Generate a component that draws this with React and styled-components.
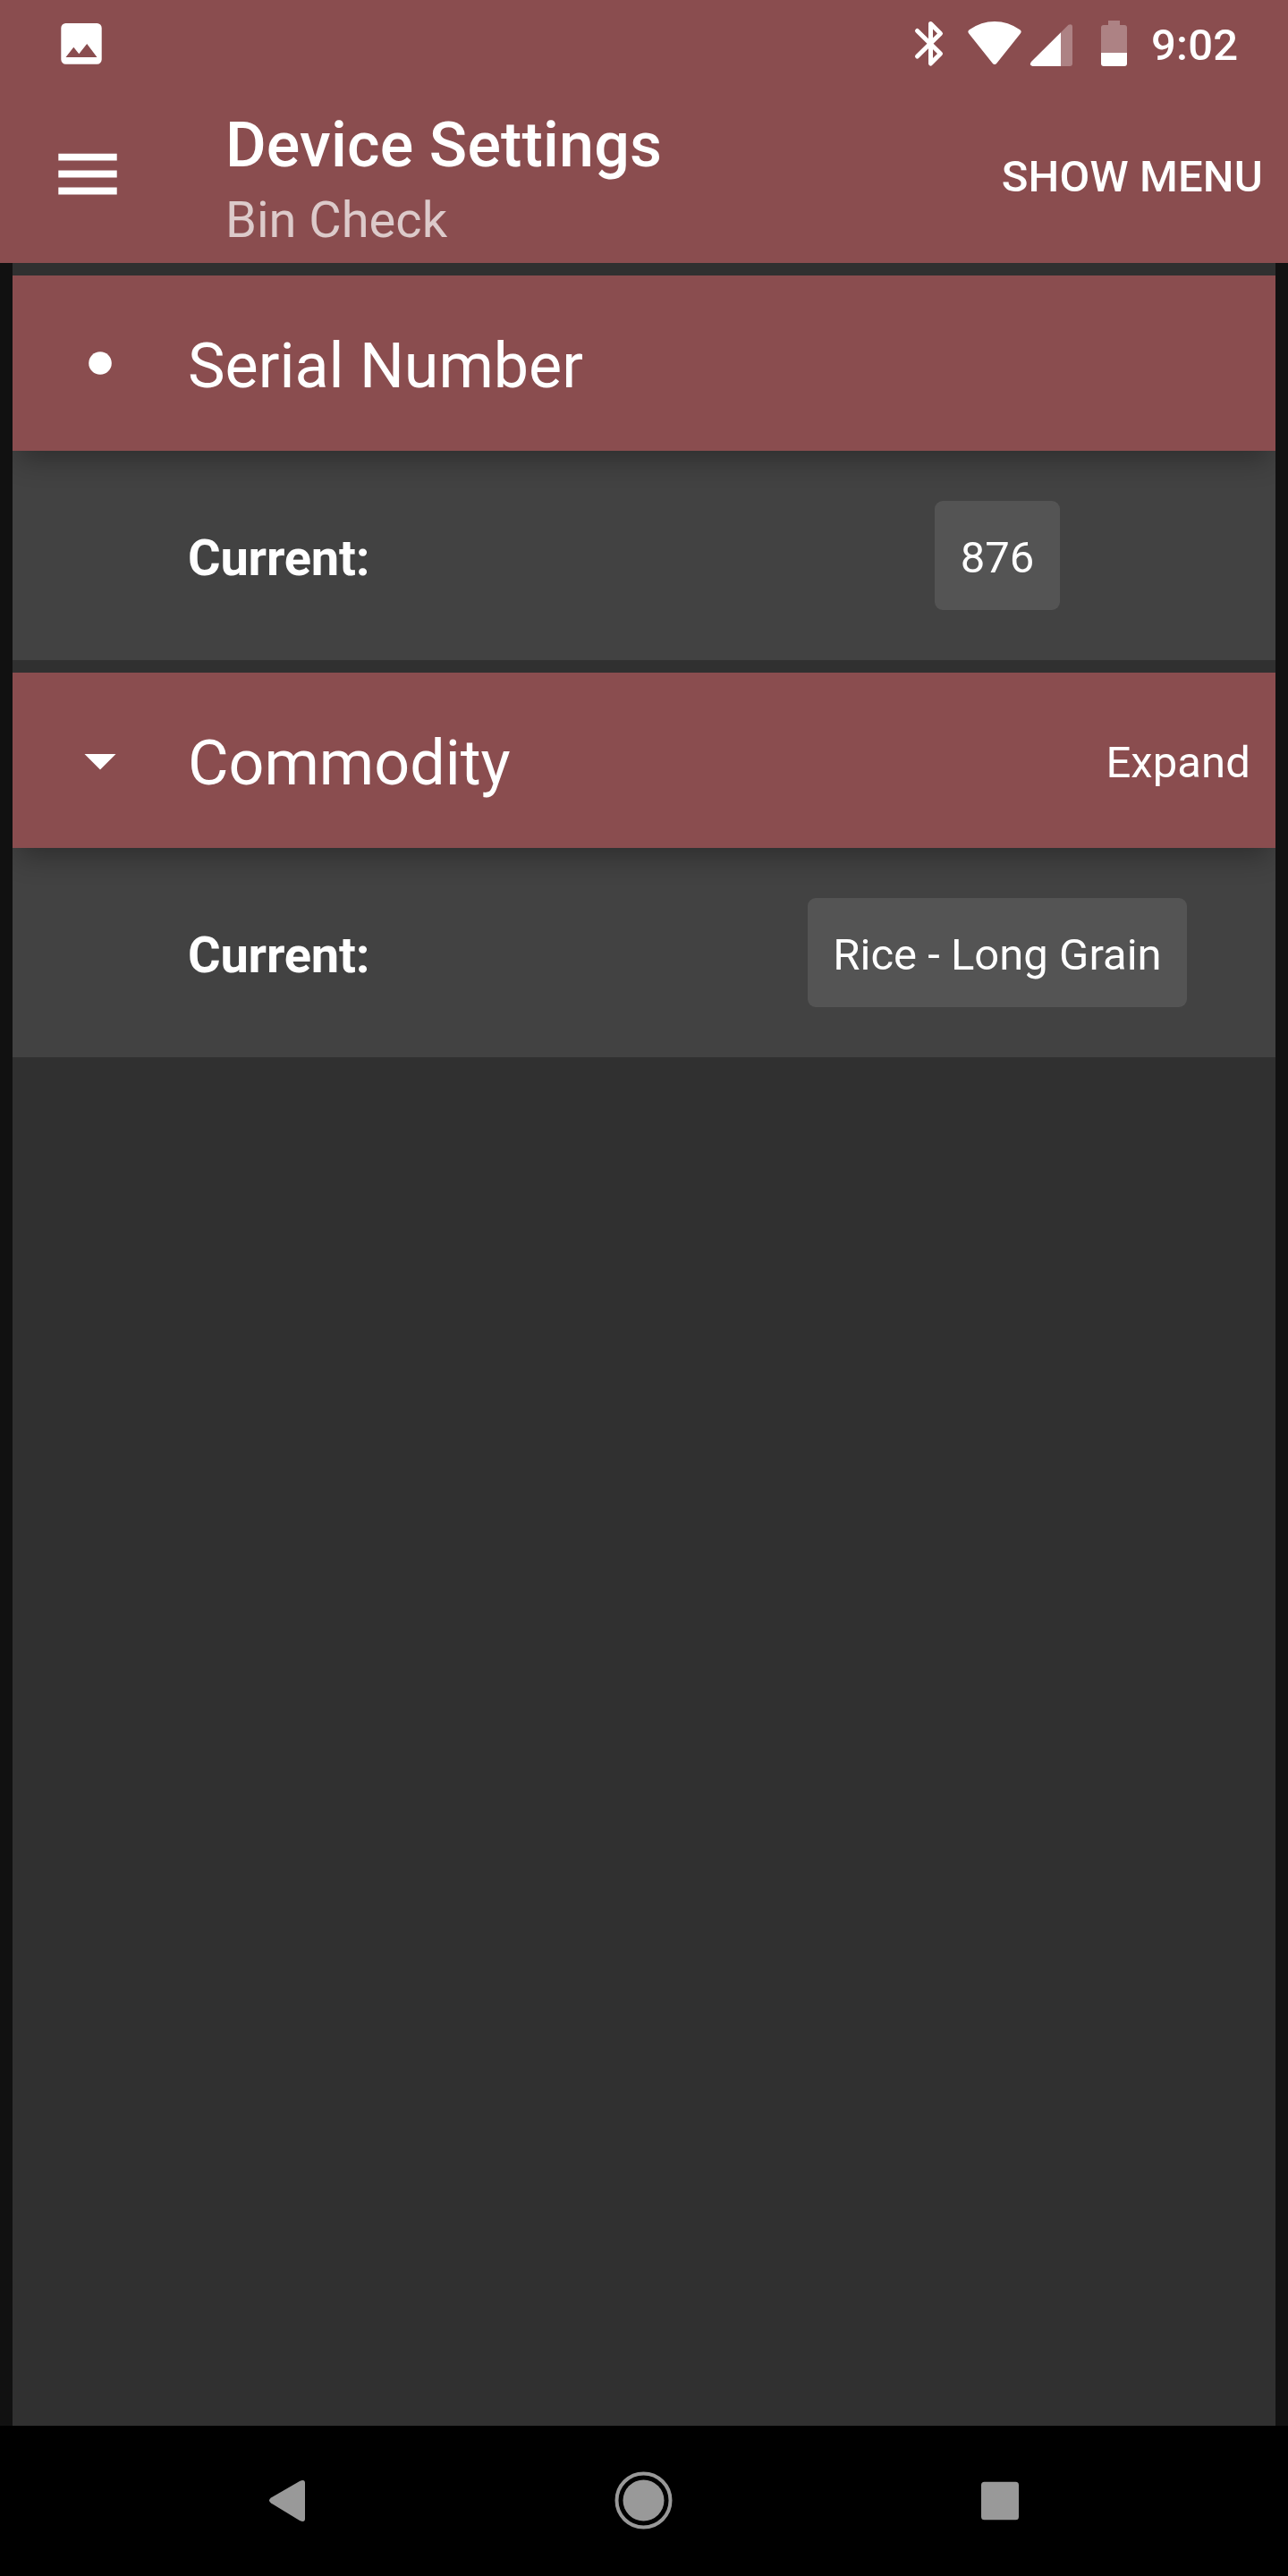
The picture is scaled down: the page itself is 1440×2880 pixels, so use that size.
import React from "react";
import styled, { createGlobalStyle } from "styled-components";

const GlobalStyle = createGlobalStyle`
  * { box-sizing: border-box; }
  body { margin: 0; background: #000; }
`;

const Screen = styled.div`
  width: 1440px;
  height: 2880px;
  display: flex;
  flex-direction: column;
  background: #111;
  color: #fff;
  font-family: Roboto, "Liberation Sans", sans-serif;
  overflow: hidden;
`;

const StatusBar = styled.div`
  height: 98px;
  flex: none;
  display: flex;
  align-items: flex-start;
  justify-content: space-between;
  background: #8a4d4f;
`;

const Glyph = styled.svg`
  display: block;
  flex: none;
`;

const StatusIcons = styled.div`
  display: flex;
  align-items: flex-start;
  padding-right: 56px;
`;

const Clock = styled.span`
  width: 97px;
  white-space: nowrap;
  font-size: 49px;
  font-weight: 500;
  line-height: 58px;
  letter-spacing: 0.2px;
  padding-top: 22px;
`;

const AppBar = styled.header`
  height: 196px;
  flex: none;
  display: flex;
  align-items: flex-start;
  background: #8a4d4f;
`;

const MenuButton = styled.button`
  width: 252px;
  height: 196px;
  padding: 0;
  border: 0;
  background: none;
`;

const Titles = styled.div`
  flex: 1;
  padding-top: 23px;
`;

const Title = styled.h1`
  margin: 0;
  font-size: 70px;
  font-weight: 500;
  line-height: 82px;
  letter-spacing: 0.16px;
`;

const Subtitle = styled.p`
  margin: 10px 0 0;
  font-size: 56px;
  line-height: 66px;
  color: rgba(255, 255, 255, 0.7);
`;

const TextAction = styled.button`
  padding: 71px 28px 0 0;
  border: 0;
  background: none;
  color: #fff;
  font: 500 49px/58px Roboto, "Liberation Sans", sans-serif;
  letter-spacing: 0.15px;
`;

const Content = styled.main`
  flex: 1;
  margin: 0 14px;
  padding-top: 14px;
  display: flex;
  flex-direction: column;
  gap: 14px;
  background: #303030;
`;

const Section = styled.section`
  overflow: hidden;
  background: #424242;
`;

const SectionHeader = styled.div`
  height: 196px;
  display: flex;
  align-items: center;
  padding-right: 28px;
  background: #8a4d4f;
  box-shadow: 0 17px 28px -7px rgba(0, 0, 0, 0.3);
`;

const SectionTitle = styled.h2`
  flex: 1;
  margin: 0;
  padding-top: 6px;
  font-size: 70px;
  font-weight: 400;
  line-height: 82px;
`;

const ExpandLabel = styled.span`
  padding-top: 5px;
  font-size: 49px;
  line-height: 58px;
  letter-spacing: 0.1px;
`;

const SectionBody = styled.div`
  height: 234px;
  display: flex;
  align-items: center;
  padding-left: 196px;
`;

const Label = styled.span`
  flex: 1;
  padding-top: 6px;
  font-size: 56px;
  font-weight: 700;
  line-height: 66px;
  letter-spacing: -0.2px;
`;

const ValueCell = styled.div`
  width: 622px;
  display: flex;
  justify-content: center;
`;

const Value = styled.span`
  height: 122px;
  min-width: 140px;
  padding: 0 28px;
  border-radius: 9px;
  background: #545454;
  font-size: 49px;
  line-height: 127px;
  text-align: center;
`;

const NavBar = styled.nav`
  height: 168px;
  flex: none;
  background: #000;
  display: flex;
`;

const sectionIcons = {
  dot: <circle cx="98" cy="98" r="12.8" />,
  caret: <path d="M80.5 91h35L98 108.5z" />,
};

function SettingSection({ icon, title, action, value }) {
  return (
    <Section>
      <SectionHeader>
        <Glyph width="196" height="196" fill="#fff">{sectionIcons[icon]}</Glyph>
        <SectionTitle>{title}</SectionTitle>
        {action && <ExpandLabel>{action}</ExpandLabel>}
      </SectionHeader>
      <SectionBody>
        <Label>Current:</Label>
        <ValueCell><Value>{value}</Value></ValueCell>
      </SectionBody>
    </Section>
  );
}

export default function App() {
  return (
    <Screen>
      <GlobalStyle />
      <StatusBar>
        <Glyph width="180" height="98" fill="#fff">
          <path fillRule="evenodd" d="M73.500 26h35a5.200 5.200 0 0 1 5.200 5.200v35.300a5.200 5.200 0 0 1-5.200 5.200h-35a5.200 5.200 0 0 1-5.200-5.200V31.200a5.200 5.200 0 0 1 5.200-5.200zM73.500 64h35L97.200 49 88.300 60.200l-6-7.400z" />
        </Glyph>
        <StatusIcons>
          <Glyph width="267" height="98" viewBox="1020 0 267 98" fill="#fff">
            <path d="M1025.500 34.500l26 25.500-11 11V26.500l11 11-26 25.500" fill="none" stroke="#fff" strokeWidth="5" strokeLinecap="round" strokeLinejoin="round" />
            <path d="M1083.200 37.500q-2-2.500.5-4.300Q1097 24 1112 24t28.300 9.200q2.500 1.800.5 4.300l-26.300 33q-2.500 3-5 0z" />
            <path d="M1186 36.300V74h-31.500q-4.500-1-1.500-5z" />
            <path d="M1186 36.300l8.500-8.500q4.500-2 4.500 2V71q0 3-3 3h-10z" fillOpacity=".3" />
            <path d="M1231 59V31q0-3 3-3h5v-5h13v5h5q3 0 3 3v28z" fillOpacity=".3" />
            <path d="M1231 59h29v12q0 3-3 3h-23q-3 0-3-3z" />
          </Glyph>
          <Clock>9:02</Clock>
        </StatusIcons>
      </StatusBar>
      <AppBar>
        <MenuButton aria-label="Menu">
          <Glyph width="252" height="196" fill="#fff">
            <path d="M65.300 73.700h65.400v7.800H65.300zM65.300 92.600h65.400v7.800H65.300zM65.300 111.600h65.400v7.800H65.300z" />
          </Glyph>
        </MenuButton>
        <Titles>
          <Title>Device Settings</Title>
          <Subtitle>Bin Check</Subtitle>
        </Titles>
        <TextAction>SHOW MENU</TextAction>
      </AppBar>
      <Content>
        <SettingSection icon="dot" title="Serial Number" value="876" />
        <SettingSection icon="caret" title="Commodity" action="Expand" value="Rice - Long Grain" />
      </Content>
      <NavBar>
        <Glyph width="1440" height="168" viewBox="0 0 1440 168" fill="#999">
          <path d="M303 86.500q-4-3 0-6L335 62q6-2.500 6 2v40q0 4.500-6 2z" />
          <circle cx="719.500" cy="83.500" r="23" />
          <circle cx="719.500" cy="83.500" r="30" fill="none" stroke="#999" strokeWidth="4" />
          <rect x="1097" y="62.700" width="42" height="42.500" rx="3.500" />
        </Glyph>
      </NavBar>
    </Screen>
  );
}
